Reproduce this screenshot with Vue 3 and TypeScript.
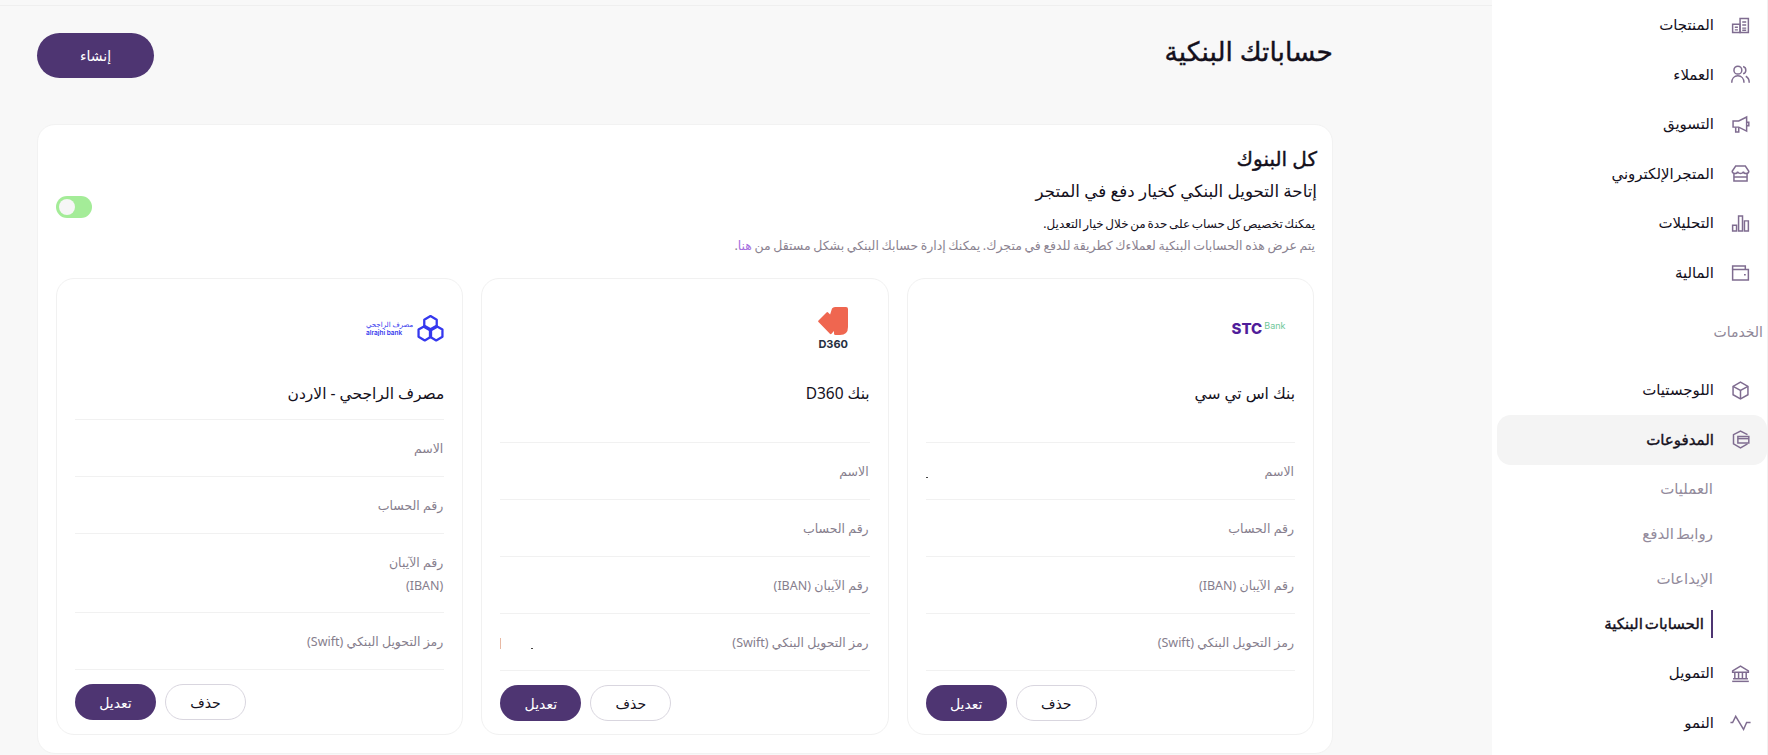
<script setup lang="ts">
interface NavItem {
  label: string
  paths?: string[]
  kind?: 'main' | 'section' | 'open' | 'sub' | 'current'
}

interface BankRow {
  label: string
  narrow?: boolean
  dot?: boolean
  mark?: boolean
}

interface Bank {
  id: string
  name: string
  short?: boolean
  rows: BankRow[]
}

const nav: NavItem[] = [
  { label: 'المنتجات', paths: ['M3 10.5h8.5V20H3z', 'M11.5 4H21v16h-9.5z', 'M5.5 14h3.5M5.5 17h3.5M14 8h4.5M14 11.5h4.5M14 15h4.5M14 17.5h4.5'] },
  { label: 'العملاء', paths: ['M13.5 7a4.5 4.5 0 1 1-9 0 4.5 4.5 0 0 1 9 0z', 'M2 21.5c0-4.8 3-8 7-8s7 3.2 7 8', 'M15 2.8a4.4 4.4 0 0 1 0 8.4', 'M18 14c2.6 1.2 4 4 4 7.5'] },
  { label: 'التسويق', paths: ['M3.5 8H10l9-4.5v16L10 15H3.5z', 'M6.5 15v5.5h3.5V15', 'M19 9.5h2.5v4H19'] },
  { label: 'المتجر الإلكتروني', paths: ['M4.5 12v8.5h15V12', 'M6.5 3.5h11l4 6c0 1.6-1.3 2.5-3 2.5s-3-1-3.2-2.2c-.3 1.2-1.6 2.2-3.3 2.2s-3-1-3.3-2.2C8.500 11 7.200 12 5.500 12s-3-.9-3-2.500z', 'M4.500 16h15'] },
  { label: 'التحليلات', paths: ['M3 14h4.500v6.500H3z', 'M9.800 3.500h4.500v17H9.800z', 'M16.500 9H21v11.500h-4.500z'] },
  { label: 'المالية', paths: ['M3 8.500V4.500h14.500v4', 'M3 8.500h18v12H3z', 'M16 14.500h2'] },
  { label: 'الخدمات', kind: 'section' },
  { label: 'اللوجستيات', paths: ['M12 2.500l8.500 4.800v9.500L12 21.500l-8.500-4.700V7.300z', 'M3.500 7.300 12 12l8.500-4.700', 'M12 12v9.500'] },
  { label: 'المدفوعات', kind: 'open', paths: ['M20 6.500 12 2.500 4 6.500v10.500l8 4.500 8-4.500', 'M9 8.500h12.500v7.500H9z', 'M9 11h12.500'] },
  { label: 'العمليات', kind: 'sub' },
  { label: 'روابط الدفع', kind: 'sub' },
  { label: 'الإيداعات', kind: 'sub' },
  { label: 'الحسابات البنكية', kind: 'current' },
  { label: 'التمويل', paths: ['M3 9 12 3.500 21 9v1.500H3z', 'M5.500 10.500v7.500M9.800 10.500v7.500M14.200 10.500v7.500M18.500 10.500v7.500', 'M3.500 18h17', 'M2.500 21h19'] },
  { label: 'النمو', paths: ['M0.500 12H3L6.500 5l9 15L19 12h4.500'] },
]

const rows = (opts: Partial<Record<number, Partial<BankRow>>> = {}): BankRow[] =>
  ['الاسم', 'رقم الحساب', 'رقم الآيبان (IBAN)', 'رمز التحويل البنكي (Swift)'].map((label, i) => ({ label, ...opts[i] }))

const banks: Bank[] = [
  { id: 'stc', name: 'بنك اس تي سي', rows: rows({ 0: { dot: true } }) },
  { id: 'd360', name: 'بنك D360', rows: rows({ 3: { dot: true, mark: true } }) },
  { id: 'rajhi', name: 'مصرف الراجحي - الاردن', short: true, rows: rows({ 2: { narrow: true } }) },
]
</script>

<template>
  <div class="app" dir="rtl">
    <aside class="side">
      <template v-for="item in nav" :key="item.label">
        <div v-if="item.kind === 'section'" class="side-section">{{ item.label }}</div>
        <div v-else-if="item.kind === 'sub'" class="side-sub">{{ item.label }}</div>
        <div v-else-if="item.kind === 'current'" class="side-sub side-current"><span>{{ item.label }}</span></div>
        <div v-else class="side-item" :class="{ open: item.kind === 'open' }">
          <svg class="side-icon" viewBox="0 0 24 24" fill="none" stroke="currentColor" stroke-width="1.700">
            <path v-for="d in item.paths" :key="d" :d="d" />
          </svg>
          <span class="side-label">{{ item.label }}</span>
        </div>
      </template>
    </aside>

    <main class="main">
      <div class="topline"></div>
      <div class="content">
        <header class="page-head">
          <h1>حساباتك البنكية</h1>
          <button class="btn btn-primary btn-create">إنشاء</button>
        </header>

        <section class="panel">
          <div class="panel-head">
            <div class="panel-text">
              <h2>كل البنوك</h2>
              <p class="lead">إتاحة التحويل البنكي كخيار دفع في المتجر</p>
              <p class="note">يمكنك تخصيص كل حساب على حدة من خلال خيار التعديل.</p>
              <p class="muted">يتم عرض هذه الحسابات البنكية لعملاءك كطريقة للدفع في متجرك. يمكنك إدارة حسابك البنكي بشكل مستقل من <a>هنا</a>.</p>
            </div>
            <span class="toggle"><i></i></span>
          </div>

          <div class="bank-grid">
            <article v-for="bank in banks" :key="bank.id" class="bank">
              <div class="logo">
                <div v-if="bank.id === 'stc'" class="logo-stc" dir="ltr"><b>STC</b><span>Bank</span></div>
                <div v-else-if="bank.id === 'd360'" class="logo-d360">
                  <svg viewBox="0 0 30 28" width="30" height="28">
                    <path d="M14 1.500Q15 0 17 0h11q2 0 2 2v18q0 8-8 8h-4.500q-1.500 0-1.500-1.500V24l-2.500 2.800q-.8.800-1.600 0L.500 15q-.7-.8 0-1.600l8-7.900q.8-.8 1.600 0l2 2z" fill="#ef6650" />
                  </svg>
                  <span>D360</span>
                </div>
                <div v-else class="logo-rajhi">
                  <div class="rajhi-text">
                    <span>مصرف الراجحي</span>
                    <span class="rajhi-latin" dir="ltr">alrajhi bank</span>
                  </div>
                  <svg viewBox="0 0 26 26" width="27" height="27" fill="none" stroke="#3538ee" stroke-width="2.200" stroke-linejoin="round">
                    <path d="M13 1l6 3.500v7l-6 3.500-6-3.500v-7z" />
                    <path d="M7.500 10.500l6 3.500v7l-6 3.500-6-3.500v-7z" />
                    <path d="M18.500 10.500l6 3.500v7l-6 3.500-6-3.500v-7z" />
                  </svg>
                </div>
              </div>
              <h3 class="bank-name" :class="{ short: bank.short }">{{ bank.name }}</h3>
              <div v-for="row in bank.rows" :key="row.label" class="bank-row">
                <span class="row-label" :class="{ narrow: row.narrow }">{{ row.label }}</span>
                <span class="row-value">
                  <i v-if="row.dot" class="dot"></i>
                  <i v-if="row.mark" class="mark"></i>
                </span>
              </div>
              <div class="bank-actions">
                <button class="btn btn-line">حذف</button>
                <button class="btn btn-primary">تعديل</button>
              </div>
            </article>
          </div>
        </section>
      </div>
    </main>
  </div>
</template>

<style>
html, body { margin: 0; overflow: hidden; }
</style>

<style scoped>
.app {
  display: flex; width: 1768px; height: 755px; overflow: hidden;
  font-family: "Noto Sans", "DejaVu Sans", sans-serif; color: #14101c; background: #f8f8f8;
}
.side {
  flex: 0 0 276px; box-sizing: border-box; padding: 0.500px 0 0 5px;
  background: #fff; border-right: 1px solid #f1f1f1;
}
.side-item {
  display: flex; align-items: center; gap: 16px; height: 49.500px; padding-right: 16px;
  font-size: 15px; border-radius: 14px; word-spacing: -3.500px;
}
.side-label { padding-bottom: 2px; }
.side-item.open { background: #f4f4f4; margin-bottom: 2px; -webkit-text-stroke: 0.4px #14101c; }
.side-icon { width: 21px; height: 21px; color: #7f6c90; flex: none; }
.side-section { height: 68px; line-height: 68px; padding-right: 4px; font-size: 14px; color: #8f8798; }
.side-sub { height: 45px; line-height: 43px; padding-right: 54px; font-size: 15px; color: #938b9c; word-spacing: -2px; }
.side-current { display: flex; align-items: center; margin-bottom: 2px; color: #14101c; -webkit-text-stroke: 0.4px #14101c; }
.side-current span { display: block; height: 28px; line-height: 26px; padding-right: 7px; border-right: 2px solid #4e3572; }

.main { flex: 1; min-width: 0; }
.topline { height: 5px; border-bottom: 1px solid #efefef; }
.content { padding: 0 159px 0 37px; }
.page-head { display: flex; justify-content: space-between; align-items: center; height: 118px; padding-bottom: 19px; box-sizing: border-box; }
.page-head h1 { margin: 0 0 10px; font-size: 26.500px; font-weight: 400; -webkit-text-stroke: 0.4px #14101c; }

.btn { font-family: inherit; font-size: 14px; border-radius: 18px; width: 81px; height: 36px; padding: 0; cursor: pointer; }
.btn-primary { background: #4e3572; color: #fff; border: 0; }
.btn-line { background: #fff; color: #14101c; border: 1px solid #d9d6df; }
.btn-create { width: 117px; height: 45px; border-radius: 23px; }

.panel { background: #fff; border: 1px solid #f2f2f2; border-radius: 18px; padding: 16px 18px 18px; }
.panel-head { display: flex; justify-content: space-between; align-items: center; height: 137px; }
.panel-text { align-self: flex-start; margin-right: -3px; }
.panel-head h2 { margin: 0; font-size: 20px; font-weight: 400; line-height: 36px; -webkit-text-stroke: 0.4px #14101c; }
.lead { margin: 0; font-size: 16.700px; line-height: 28px; }
.note { margin: 8px 2px 0 0; font-size: 12px; line-height: 22px; word-spacing: -1.500px; }
.muted { margin: 0 2px 0 0; font-size: 12.500px; line-height: 22px; color: #8b8391; word-spacing: -0.700px; }
.muted a { color: #a56fe0; }
.toggle { width: 36px; height: 22px; margin-bottom: 6px; border-radius: 11px; background: #a4ec98; display: flex; align-items: center; justify-content: flex-end; padding: 0 3px; box-sizing: border-box; }
.toggle i { width: 16px; height: 16px; border-radius: 50%; background: #f6f6f6; }

.bank-grid { display: grid; grid-template-columns: repeat(3, 1fr); gap: 18px; }
.bank { border: 1px solid #f1f1f1; border-radius: 18px; padding: 13px 18px 13px; }
.logo { height: 73px; display: flex; align-items: center; justify-content: flex-start; width: 73px; }
.logo-stc { display: flex; align-items: flex-start; justify-content: center; width: 100%; font-family: "Inter", sans-serif; }
.logo-stc b { font-size: 15px; font-weight: 800; color: #4f1d9a; line-height: 16px; }
.logo-stc span { font-size: 9px; color: #6fc79a; line-height: 10px; margin-left: 2px; }
.logo-d360 { display: flex; flex-direction: column; align-items: center; width: 100%; }
.logo-d360 span { font-family: "Inter", sans-serif; font-size: 11px; font-weight: 700; color: #27303f; line-height: 13px; margin-top: 3px; }
.logo-rajhi { display: flex; align-items: center; gap: 4px; flex-direction: row-reverse; flex: none; }
.rajhi-text { display: flex; flex-direction: column; font-size: 7px; line-height: 9px; color: #3538ee; white-space: nowrap; text-align: left; }
.rajhi-latin { font-family: "Inter", sans-serif; font-size: 6.500px; font-weight: 600; }
.bank-name { margin: 0; font-size: 15.500px; font-weight: 400; line-height: 24px; padding: 16px 0 37px; border-bottom: 1px solid #f1f1f1; }
.bank-name.short { padding: 16px 0 14px; }
.bank-row { display: flex; justify-content: space-between; align-items: center; padding: 17px 1px 15px 0; min-height: 24px; border-bottom: 1px solid #f1f1f1; font-size: 12.500px; line-height: 24px; color: #867e8d; }
.row-label.narrow { max-width: 72px; line-height: 23px; }
.row-value { display: flex; align-items: flex-end; gap: 30px; height: 12px; }
.dot { width: 2px; height: 1.500px; background: #444; }
.mark { width: 1px; height: 11px; background: #e8b9a4; }
.bank-actions { display: flex; justify-content: flex-end; gap: 9px; padding-top: 14px; }
</style>
